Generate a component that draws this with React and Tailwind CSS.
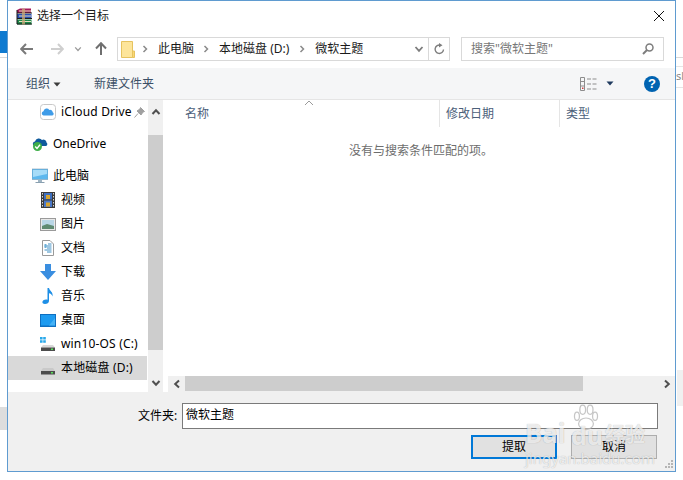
import React from 'react'

const FONT = { fontFamily: '"Noto Sans", "Noto Sans CJK SC", sans-serif' }

const WinRar = () => (
    <svg width="17" height="17" viewBox="0 0 17 17" className="shrink-0">
        <path d="M1 2 L4 0.5 H15 V5 H1 Z" fill="#a3195b" />
        <path d="M1 6 H15.5 V10.5 H1 Z" fill="#2a4fb0" />
        <path d="M1 11.5 H15.5 V16.5 H1 Z" fill="#1f8a4c" />
        <path d="M1 5 H16 M1 10.5 H16 M1 16 H16 M1 2 V16" stroke="#1a1a1a" strokeWidth="1" fill="none" />
        <path d="M3 3 H15 M3 8 H15 M3 13.5 H15" stroke="#e8dfc0" strokeWidth="1" />
        <path d="M6 0.5 H9 V16.5 H6 Z" fill="#c9a877" opacity="0.75" />
    </svg>
)

const ArrowLeft = ({ color = '#7a7a7a', flip = false }) => (
    <svg width="14" height="12" viewBox="0 0 14 12" className={flip ? 'rotate-180' : ''}>
        <path d="M6 1 L1.2 6 L6 11 M1.5 6 H13" fill="none" stroke={color} strokeWidth="2" />
    </svg>
)

const Chevron = ({ size = 10, color = '#7a7a7a', width = 1.6 }) => (
    <svg width={size} height={size} viewBox="0 0 10 10">
        <path d="M1.5 3 L5 6.8 L8.5 3" fill="none" stroke={color} strokeWidth={width} />
    </svg>
)

const Crumb = () => (
    <svg width="6" height="8" viewBox="0 0 6 8" className="shrink-0">
        <path d="M1.5 1 L4.5 4 L1.5 7" fill="none" stroke="#8a8a8a" strokeWidth="1.5" />
    </svg>
)

const Caret = ({ color = '#3c3c3c' }) => (
    <svg width="8" height="5" viewBox="0 0 8 5">
        <path d="M0.5 0.5 H7.5 L4 4.5 Z" fill={color} />
    </svg>
)

const ViewIcon = () => (
    <svg width="17" height="14" viewBox="0 0 17 14">
        <path d="M0.5 0.5 H4.5 V13.5 H0.5 Z M0.5 4.5 H4.5 M0.5 9 H4.5" fill="none" stroke="#8d8d8d" />
        <path d="M7 2 H11 M12.5 2 H16.5 M7 7 H11 M12.5 7 H16.5 M7 12 H11 M12.5 12 H16.5" stroke="#8d8d8d" />
        <rect x="2" y="10.5" width="1.5" height="1.5" fill="#d04040" />
    </svg>
)

const Row = ({ indent, icon, label, selected, extra, wide, className = '' }) => (
    <div className={`flex h-6 items-center shrink-0 ${indent ? 'pl-8' : 'pl-6'} ${selected ? 'bg-[#d9d9d9]' : ''} ${className}`}>
        <span className="w-4 h-4 flex items-center justify-center shrink-0">{icon}</span>
        <span className={`ml-[5px] text-black whitespace-nowrap ${wide ? 'tracking-[0.17px]' : ''}`}>{label}</span>
        {extra}
    </div>
)

const icons = {
    icloud: (
        <svg width="16" height="16" viewBox="0 0 16 16">
            <rect x="0.5" y="0.5" width="15" height="15" rx="3" fill="#fff" stroke="#c8c8c8" />
            <path d="M3.5 11.5 a2.2 2.2 0 0 1 0-4.3 a3.2 3.2 0 0 1 5.8-1.3 a2.6 2.6 0 0 1 3.4 2.4 a1.7 1.7 0 0 1-0.4 3.2 Z" fill="#3f9ce8" />
        </svg>
    ),
    onedrive: (
        <svg width="16" height="16" viewBox="0 0 16 16">
            <path d="M2 10 a2.5 2.5 0 0 1 1-4.6 a4 4 0 0 1 7-1.4 a3 3 0 0 1 4.5 2.5 a2 2 0 0 1-0.5 3.5 Z" fill="#0f5a9c" />
            <circle cx="5.5" cy="10.5" r="4.5" fill="#3fae49" />
            <path d="M3.2 10.5 L5 12.4 L8 8.8" fill="none" stroke="#fff" strokeWidth="1.4" />
        </svg>
    ),
    pc: (
        <svg width="16" height="16" viewBox="0 0 16 16">
            <rect x="0" y="1" width="16" height="10.5" fill="#5db8ee" stroke="#7f9db3" strokeWidth="0.6" />
            <path d="M1 2 H15 V6 L1 9 Z" fill="#a6dcf8" />
            <path d="M6 12 H10 V14 H6 Z" fill="#9fb4c3" />
            <path d="M3.5 14.5 H12.5" stroke="#8aa0b0" strokeWidth="1" />
        </svg>
    ),
    video: (
        <svg width="14" height="16" viewBox="0 0 14 16">
            <rect x="0" y="0" width="14" height="16" fill="#3b3b3b" />
            <rect x="3" y="1" width="8" height="6.5" fill="#3d6fc0" />
            <rect x="3" y="8.5" width="8" height="6.5" fill="#4a78c8" />
            <rect x="5" y="3" width="4" height="4" fill="#d8a52e" />
            <rect x="5" y="10.5" width="4" height="4" fill="#d8a52e" />
            <path d="M1.5 1 V15 M12.5 1 V15" stroke="#d9d9d9" strokeWidth="1" strokeDasharray="1.5 1.5" />
        </svg>
    ),
    picture: (
        <svg width="16" height="13" viewBox="0 0 16 13">
            <rect x="0.5" y="0.5" width="15" height="12" fill="#e8e8e8" stroke="#9a9a9a" />
            <rect x="2" y="2" width="12" height="9" fill="#b9d6e6" />
            <path d="M2 8 L7 6 L14 8 V11 H2 Z" fill="#5f8a72" />
        </svg>
    ),
    doc: (
        <svg width="12" height="16" viewBox="0 0 12 16">
            <path d="M0.5 0.5 H8 L11.5 4 V15.5 H0.5 Z" fill="#fff" stroke="#9a9a9a" />
            <path d="M6 4 H9.5 M2.5 6 H9.5 M5 8 H9.5 M2.5 10 H9.5 M5 12 H9.5" stroke="#3f8fc4" />
            <path d="M2.5 4 H4.5 V8 H2.5 Z" fill="#6fb0d8" />
        </svg>
    ),
    download: (
        <svg width="16" height="16" viewBox="0 0 16 16">
            <path d="M5 0 H11 V7 H16 L8 16 L0 7 H5 Z" fill="#3a8ee0" />
        </svg>
    ),
    music: (
        <svg width="12" height="16" viewBox="0 0 12 16">
            <path d="M5.5 0 H7 C7.5 3 11.5 4 10.5 8.5 C10 6.5 8.5 5.5 7 5.2 V13 C7 15 5 16 3 16 C1 16 0 15 0.5 13.5 C1 12 3.5 11 5.5 11.8 Z" fill="#1e8fe6" />
        </svg>
    ),
    desktop: (
        <svg width="16" height="13" viewBox="0 0 16 13">
            <rect x="0" y="0" width="16" height="13" fill="#0f6fc0" />
            <rect x="1" y="1" width="14" height="10.5" fill="#1e9bf0" />
            <path d="M9 11.5 L15 4 V11.5 Z" fill="#45b2f6" />
        </svg>
    ),
    winc: (
        <svg width="16" height="16" viewBox="0 0 16 16">
            <path d="M0 1 H2.6 V3.6 H0 Z M3.2 1 H5.8 V3.6 H3.2 Z M0 4.2 H2.6 V6.8 H0 Z M3.2 4.2 H5.8 V6.8 H3.2 Z" fill="#29a8ea" />
            <path d="M3 9 H13 L15 11.5 H1 Z" fill="#d8d8d8" />
            <rect x="1" y="11.5" width="14" height="3.5" fill="#4c4c4c" />
            <rect x="11" y="12.5" width="2" height="1.5" fill="#58e05a" />
        </svg>
    ),
    disk: (
        <svg width="16" height="16" viewBox="0 0 16 16">
            <path d="M3 8 H13 L15 11 H1 Z" fill="#c9c9c9" />
            <rect x="1" y="11" width="14" height="3.5" fill="#4c4c4c" />
            <rect x="11" y="12" width="2" height="1.5" fill="#58e05a" />
        </svg>
    ),
}

const Watermark = () => (
    <div className="absolute left-[525px] top-[404px] w-[122px] h-[60px] pointer-events-none text-white/75 [text-shadow:0_0_1px_rgba(0,0,0,0.3)]">
        <svg width="30" height="28" viewBox="0 0 30 34" className="absolute left-[46px] top-0">
            <g fill="#ffffff" fillOpacity="0.35" stroke="#b8b8b8" strokeOpacity="0.8" strokeWidth="1.5">
                <ellipse cx="15" cy="24" rx="9" ry="7" />
                <ellipse cx="4" cy="15" rx="3" ry="5" />
                <ellipse cx="11" cy="7" rx="3.5" ry="5.5" />
                <ellipse cx="20" cy="7" rx="3.5" ry="5.5" />
                <ellipse cx="26" cy="15" rx="3" ry="5" />
            </g>
        </svg>
        <span className="absolute left-0 top-[14px] text-[26px] font-bold leading-[30px]">Bai</span>
        <span className="absolute left-[46px] top-[16px] text-[25px] font-bold leading-[30px]">du</span>
        <span className="absolute left-[80px] top-[19px] text-[20px] font-bold leading-[24px]">经验</span>
        <span className="absolute left-0 top-[46px] text-[15px] leading-[16px] whitespace-nowrap">jingyan.baidu.com</span>
    </div>
)

const App = () => {
    return (
        <div className="relative w-[683px] h-[480px] overflow-hidden bg-white text-[12px]" style={FONT}>
            {/* window behind the dialog */}
            <div className="absolute left-0 top-[31px] w-[7px] h-[22px] bg-[#0f7ad0]" />
            <div className="absolute left-0 top-[57px] w-[7px] h-px bg-[#d9d9d9]" />
            <div className="absolute left-0 top-[407px] w-[7px] h-[23px] bg-[#dddddd]" />
            <div className="absolute left-[676px] top-[57px] w-[7px] h-px bg-[#d9d9d9]" />
            <div className="absolute left-[676px] top-[66px] w-[7px] h-px bg-[#e5e5e5]" />
            <div className="absolute left-[676px] top-[87px] w-[7px] h-px bg-[#e5e5e5]" />
            <div className="absolute left-[676px] top-[68px] text-[#888] text-[11px] leading-[16px]">sl</div>
            <div className="absolute left-[677px] top-[370px] w-[6px] h-[36px] bg-[#f0f0f0]" />

            <div className="ml-[7px] w-[669px] h-[472px] flex flex-col border border-[#5f9bd0] bg-white">
                {/* title bar */}
                <div className="h-[29px] shrink-0 flex items-center pl-2 pr-[10px] pt-[1px]">
                    <WinRar />
                    <span className="ml-1 text-[#1a1a1a]">选择一个目标</span>
                    <svg width="12" height="12" viewBox="0 0 12 12" className="ml-auto">
                        <path d="M1 1 L11 11 M11 1 L1 11" stroke="#111" strokeWidth="1" />
                    </svg>
                </div>

                {/* nav + address */}
                <div className="h-[38px] shrink-0 flex items-start pt-[7px]">
                    <div className="w-[109px] h-[23px] shrink-0 flex items-center pl-3">
                        <ArrowLeft />
                        <span className="ml-4"><ArrowLeft color="#cfcfcf" flip /></span>
                        <span className="ml-[10px]"><Chevron size={8} color="#9a9a9a" /></span>
                        <svg width="12" height="13" viewBox="0 0 12 13" className="ml-[13px]">
                            <path d="M1 6.5 L6 1.2 L11 6.5 M6 1.5 V13" fill="none" stroke="#6f6f6f" strokeWidth="2" />
                        </svg>
                    </div>
                    <div className="w-[333px] h-[24px] shrink-0 flex items-center border border-[#d9d9d9] pl-[3px]">
                        <svg width="14" height="17" viewBox="0 0 14 17" className="shrink-0">
                            <path d="M0.5 0.5 H11.5 V16.5 H0.5 Z" fill="#fde59a" stroke="#e6c35f" />
                            <path d="M11.5 10 H13.5 V16.5 H11.5 Z" fill="#fbd873" stroke="#e6c35f" />
                        </svg>
                        <span className="ml-[7px]"><Crumb /></span>
                        <span className="ml-[10px] text-[#1a1a1a] whitespace-nowrap">此电脑</span>
                        <span className="ml-[9px]"><Crumb /></span>
                        <span className="ml-[10px] text-[#1a1a1a] whitespace-nowrap">本地磁盘 (D:)</span>
                        <span className="ml-[10px]"><Crumb /></span>
                        <span className="ml-[10px] text-[#1a1a1a] whitespace-nowrap">微软主题</span>
                        <span className="ml-auto"><Chevron color="#7d7d7d" width={1.8} /></span>
                        <div className="ml-[4px] h-full w-[21px] border-l border-[#d9d9d9] flex items-center justify-center">
                            <svg width="11" height="12" viewBox="0 0 11 12">
                                <path d="M9.5 6.5 A4.2 4.2 0 1 1 6.5 2.2" fill="none" stroke="#7d7d7d" strokeWidth="1.4" />
                                <path d="M5 0 L8.5 2.2 L5 4.5 Z" fill="#7d7d7d" />
                            </svg>
                        </div>
                    </div>
                    <div className="ml-[11px] w-[203px] h-[24px] shrink-0 flex items-center border border-[#d9d9d9] pl-[9px] pr-[9px] text-[#777]">
                        <span className="whitespace-nowrap">搜索"微软主题"</span>
                        <svg width="12" height="12" viewBox="0 0 12 12" className="ml-auto">
                            <circle cx="7.5" cy="4.5" r="3.5" fill="none" stroke="#7d7d7d" strokeWidth="1.5" />
                            <path d="M5 7 L1 11" stroke="#7d7d7d" strokeWidth="2" />
                        </svg>
                    </div>
                </div>

                {/* toolbar */}
                <div className="h-[32px] shrink-0 flex items-center bg-[#f5f6f7] border-b border-[#e5e5e5] pl-[18px] pr-[15px] text-[#3b4f66]">
                    <span>组织</span>
                    <span className="ml-[3px] mt-[1px] flex"><Caret /></span>
                    <span className="ml-[33px]">新建文件夹</span>
                    <span className="ml-auto flex"><ViewIcon /></span>
                    <span className="ml-[9px] flex"><Caret color="#1f3a5f" /></span>
                    <span className="ml-[30px] w-4 h-4 rounded-full bg-[#0063b1] text-white text-[13px] font-bold leading-4 text-center" style={{ fontFamily: '"Liberation Sans", sans-serif' }}>?</span>
                </div>

                {/* body */}
                <div className="flex-1 min-h-0 flex">
                    {/* nav pane */}
                    <div className="w-[139px] shrink-0 flex flex-col">
                        <Row indent wide icon={icons.icloud} label="iCloud Drive" extra={(
                            <svg width="11" height="11" viewBox="0 0 11 11" className="ml-[2px] shrink-0">
                                <path d="M6.5 0.5 L10.5 4.5 L9 5 L7 8 L3 4 L6 2 Z M4 6.5 L0.5 10.5" fill="#a0a0a0" stroke="#a0a0a0" />
                            </svg>
                        )} />
                        <Row icon={icons.onedrive} label="OneDrive" className="mt-2" />
                        <Row icon={icons.pc} label="此电脑" className="mt-2" />
                        <Row indent icon={icons.video} label="视频" />
                        <Row indent icon={icons.picture} label="图片" />
                        <Row indent icon={icons.doc} label="文档" />
                        <Row indent icon={icons.download} label="下载" />
                        <Row indent icon={icons.music} label="音乐" />
                        <Row indent icon={icons.desktop} label="桌面" />
                        <Row indent wide icon={icons.winc} label="win10-OS (C:)" />
                        <Row indent wide selected icon={icons.disk} label="本地磁盘 (D:)" />
                    </div>
                    {/* nav scrollbar */}
                    <div className="ml-px w-[15px] shrink-0 flex flex-col bg-[#f0f0f0]">
                        <div className="h-[35px] shrink-0 flex justify-center pt-[7px]">
                            <span className="rotate-180 h-[10px]"><Chevron color="#505050" width={2} /></span>
                        </div>
                        <div className="h-[215px] shrink-0 bg-[#cdcdcd]" />
                        <div className="flex-1 flex justify-center items-end pb-[4px]">
                            <Chevron color="#505050" width={2} />
                        </div>
                    </div>
                    {/* file list */}
                    <div className="ml-[5px] flex-1 min-w-0 flex flex-col">
                        <div className="relative h-[27px] shrink-0 flex text-[#4c607a]">
                            <div className="w-[272px] pl-[17px] pt-[5px] border-r border-[#e5e5e5]">名称</div>
                            <div className="w-[120px] pl-[6px] pt-[5px] border-r border-[#e5e5e5]">修改日期</div>
                            <div className="pl-[6px] pt-[5px]">类型</div>
                            <svg width="10" height="6" viewBox="0 0 10 6" className="absolute left-[136px] top-0">
                                <path d="M1 5 L5 1 L9 5" fill="none" stroke="#9a9a9a" />
                            </svg>
                        </div>
                        <div className="flex-1 min-h-0 text-[#6d6d6d] pl-[181px] pt-[15px]">没有与搜索条件匹配的项。</div>
                        <div className="h-[16px] shrink-0 flex bg-[#f0f0f0]">
                            <div className="w-[17px] shrink-0 flex items-center justify-center">
                                <span className="rotate-90 h-[10px]"><Chevron color="#505050" width={2} /></span>
                            </div>
                            <div className="w-[398px] h-[15px] shrink-0 bg-[#cdcdcd]" />
                            <div className="flex-1 flex items-center justify-end pr-[3px]">
                                <span className="-rotate-90 h-[10px]"><Chevron color="#505050" width={2} /></span>
                            </div>
                        </div>
                    </div>
                </div>

                {/* footer */}
                <div className="h-[79px] shrink-0 bg-[#f0f0f0] relative flex flex-col pt-[11px] pl-[130px]">
                    <div className="flex items-center h-[26px] text-black">
                        <span className="w-[44px] whitespace-nowrap">文件夹:</span>
                        <div className="w-[476px] h-[26px] bg-white border border-[#7a7a7a] pl-[3px] leading-[22px]">微软主题</div>
                    </div>
                    <div className="flex mt-[6px] ml-[333px] text-black">
                        <button className="w-[86px] h-[24px] bg-[#e1e1e1] border-2 border-[#0078d7] leading-[18px]">提取</button>
                        <button className="ml-[14px] w-[86px] h-[24px] bg-[#e1e1e1] border border-[#adadad]">取消</button>
                    </div>
                    <svg width="10" height="10" viewBox="0 0 10 10" className="absolute right-[1px] bottom-[1px]">
                        <path d="M7 0 h2 v2 h-2 Z M4 3 h2 v2 h-2 Z M7 3 h2 v2 h-2 Z M1 6 h2 v2 h-2 Z M4 6 h2 v2 h-2 Z M7 6 h2 v2 h-2 Z" fill="#b5b5b5" />
                    </svg>
                </div>
            </div>
            <Watermark />
        </div>
    )
}

export default App
